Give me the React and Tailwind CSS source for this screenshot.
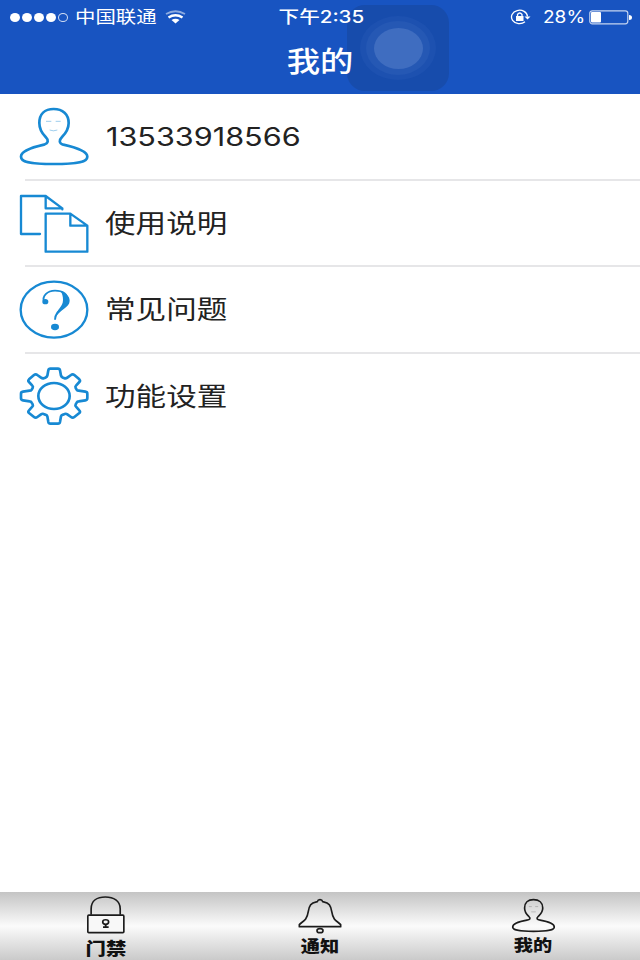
const BLUE = '#1789d3'

const SIGNAL = [true, true, true, true, false]

function PersonIcon() {
  return (
    <svg viewBox="57 35 210 180" className="h-[60px] w-[70px] shrink-0" fill="none" stroke={BLUE} strokeWidth="8" strokeLinejoin="round">
      <path d="M161 44C134 44 118 60 118 86C118 106 128 119 137 128C147 138 145 147 132 151C92 160 63 171 63 187C63 202 85 209 161 209C237 209 262 202 262 187C262 171 230 160 190 151C177 147 176 138 186 128C195 119 206 106 206 86C206 60 188 44 161 44Z" />
      <path d="M138 81H154M167 81H182M149 107Q160 112 172 107" strokeWidth="2.5" opacity="0.5" />
    </svg>
  )
}

function DocsIcon() {
  return (
    <svg viewBox="57 38 210 180" className="h-[60px] w-[70px] shrink-0" fill="none" stroke={BLUE} strokeWidth="7" strokeLinejoin="round" strokeLinecap="round">
      <path d="M120 161H63V47H137L187 84M137 47V84H187V87" />
      <path d="M137 100H211L262 136V214H137ZM211 100V136H262" />
    </svg>
  )
}

function QuestionIcon() {
  return (
    <svg viewBox="57 42 210 180" className="h-[60px] w-[70px] shrink-0" fill="none" stroke={BLUE}>
      <ellipse cx="162" cy="134" rx="100" ry="84" strokeWidth="7" />
      <path d="M132 110C126 94 141 77 165 77C190 77 203 89 203 105C203 130 166 130 165 164" strokeWidth="5.5" />
      <path d="M183 80C200 86 209 94 209 107C209 128 178 134 168 156C170 131 189 126 189 105C189 94 187 87 183 80Z" fill={BLUE} stroke="none" />
      <ellipse cx="136" cy="110" rx="9" ry="8" fill={BLUE} stroke="none" />
      <ellipse cx="165" cy="186" rx="12" ry="9.5" fill={BLUE} stroke="none" />
    </svg>
  )
}

function GearIcon() {
  return (
    <svg viewBox="57 48 210 180" className="h-[60px] w-[70px] shrink-0" fill="none" stroke={BLUE} strokeWidth="8" strokeLinejoin="round">
      <path d="M151 56H174Q179 56 180 61L183 77Q184 81 189 83L194 85Q198 86 202 83L213 75Q218 71 223 75L238 88Q242 92 238 96L228 107Q225 110 227 114L230 119Q232 122 236 122L256 125Q262 126 262 131V145Q262 150 256 151L236 154Q232 154 230 158L227 163Q225 167 228 170L238 181Q242 185 238 189L223 201Q218 205 213 201L202 193Q198 190 194 192L189 194Q184 195 183 199L180 216Q179 221 174 221H151Q146 221 145 216L142 199Q141 195 136 194L131 192Q127 190 123 193L112 201Q107 205 102 201L87 189Q83 185 87 181L97 170Q100 167 98 163L95 158Q93 154 89 154L69 151Q63 150 63 145V131Q63 126 69 125L89 122Q93 122 95 119L98 114Q100 110 97 107L87 96Q83 92 87 88L102 75Q107 71 112 75L123 83Q127 86 131 85L136 83Q141 81 142 77L145 61Q146 56 151 56Z" />
      <ellipse cx="162" cy="138" rx="47" ry="39" />
    </svg>
  )
}

const ROWS = [
  { label: '13533918566', Icon: PersonIcon, phone: true },
  { label: '使用说明', Icon: DocsIcon },
  { label: '常见问题', Icon: QuestionIcon },
  { label: '功能设置', Icon: GearIcon },
]

function LockTab() {
  return (
    <svg viewBox="80 44 118 118" className="h-[39px] w-[40px]" fill="none" stroke="#1c1c1c" strokeWidth="5">
      <path d="M94 104V86C94 62 112 50 137 50C162 50 182 62 182 86V104" />
      <rect x="84" y="105" width="109" height="53" rx="3" fill="#f8f8f8" />
      <ellipse cx="138" cy="126" rx="9" ry="7" strokeWidth="5" />
      <path d="M138 132V142M130 141H147" strokeWidth="5.5" />
    </svg>
  )
}

function BellTab() {
  return (
    <svg viewBox="84 54 132 108" className="h-[36px] w-[44px]" fill="none" stroke="#1c1c1c" strokeWidth="5" strokeLinejoin="round">
      <path d="M88 140V134C94 127 102 124 107 117C118 101 112 87 122 74C128 66 137 66 142 65C144 57 156 57 158 65C163 66 172 66 178 74C188 87 182 101 193 117C198 124 206 127 212 134V140Z" />
      <ellipse cx="150" cy="152" rx="9" ry="6" />
    </svg>
  )
}

function PersonTab() {
  return (
    <svg viewBox="94 54 134 106" className="h-[35px] w-[45px]" fill="none" stroke="#1c1c1c" strokeWidth="5">
      <path d="M161 59C144 59 134 69 134 84C134 98 141 104 147 110C153 116 151 120 141 121C117 125 98 133 98 142C98 151 114 155 161 155C208 155 224 151 224 142C224 133 205 125 181 121C171 120 169 116 175 110C181 104 189 98 189 84C189 69 178 59 161 59Z" />
      <path d="M147 80H156M166 80H175M154 96H168" strokeWidth="1.5" opacity="0.4" />
    </svg>
  )
}

function StatusBar() {
  return (
    <div className="grid h-[34px] grid-cols-3 items-center text-white">
      <div className="flex items-center pl-[10px]">
        <div className="flex gap-[2px]">
          {SIGNAL.map((on, i) => (
            <span key={i} className={on ? 'h-[9px] w-[10px] rounded-[50%] bg-white' : 'h-[9px] w-[10px] rounded-[50%] border border-white/80'} />
          ))}
        </div>
        <span className="ml-[7px] w-[82px] origin-left scale-x-[1.2] text-[17px] leading-none whitespace-nowrap">中国联通</span>
        <svg viewBox="0 0 21 14" className="ml-[8px] h-[14px] w-[21px]" fill="none" stroke="white">
          <path d="M1 4Q10.500 -1.500 20 4" strokeWidth="1.8" opacity="0.5" />
          <path d="M3.500 7.500Q10.500 3 17.500 7.500" strokeWidth="2.4" />
          <path d="M6.500 10Q10.500 7.500 14.500 10L10.500 13.500Z" fill="white" stroke="none" />
        </svg>
      </div>
      <div className="flex justify-center pl-[3px]">
        <span className="scale-x-[1.21] text-[17px] leading-none font-medium whitespace-nowrap">下午2:35</span>
      </div>
      <div className="flex items-center justify-end pr-[8px]">
        <svg viewBox="0 0 21 16" className="h-[16px] w-[21px]" fill="none" stroke="white" strokeWidth="1.3">
          <path d="M17.500 7.500A8 6.700 0 1 0 15 12.800" />
          <path d="M14.500 7.500H20.500L17.500 10.500Z" fill="white" stroke="none" />
          <rect x="6" y="7" width="7.500" height="5" fill="white" stroke="none" />
          <path d="M7.500 7V5.500Q9.700 2.500 12 5.500V7" />
        </svg>
        <span className="ml-[12px] w-[41px] origin-left scale-x-[1.12] text-[17px] leading-none">28%</span>
        <svg viewBox="0 0 43 15" className="ml-[5px] h-[15px] w-[43px]">
          <rect x="0.800" y="0.800" width="38" height="13" rx="2.500" fill="none" stroke="white" strokeOpacity="0.75" strokeWidth="1.200" />
          <rect x="2" y="2" width="10" height="10.600" rx="1" fill="white" />
          <path d="M40 5Q43 5 43 7.500Q43 10 40 10Z" fill="white" />
        </svg>
      </div>
    </div>
  )
}

export default function App() {
  return (
    <div className="flex h-[960px] w-[640px] flex-col overflow-hidden bg-white font-[Inter,'Noto_Sans_CJK_SC',sans-serif]">
      <header className="relative h-[94px] shrink-0 bg-[#1854c1]">
        <div className="absolute top-[5px] left-[347px] flex h-[86px] w-[102px] items-center justify-center rounded-[18px] bg-[#174cac]">
          <div className="flex h-[64px] w-[76px] items-center justify-center rounded-[50%] bg-[#1d51b0]">
            <div className="flex h-[54px] w-[64px] items-center justify-center rounded-[50%] bg-[#2558b4]">
              <div className="h-[41px] w-[49px] rounded-[50%] bg-[#3f6dc0]" />
            </div>
          </div>
        </div>
        <div className="relative">
          <StatusBar />
          <h1 className="mt-[12px] flex justify-center text-[28px] leading-[32px] font-medium text-white">
            <span className="scale-x-[1.19]">我的</span>
          </h1>
        </div>
      </header>

      <main className="flex-1">
        {ROWS.map(({ label, Icon, phone }, i) => (
          <div key={label}>
            <div className="flex h-[84.500px] items-center pl-[19px]">
              <Icon />
              <span className={phone
                ? 'ml-[17px] origin-left scale-x-[1.2] text-[25.500px] leading-none text-[#222]'
                : 'mt-[2px] ml-[16px] origin-left scale-x-[1.19] text-[25.700px] leading-none text-[#222]'}>
                {label}
              </span>
            </div>
            {i < ROWS.length - 1 && <div className="ml-[25px] h-[2px] bg-[#e6e6e8]" />}
          </div>
        ))}
      </main>

      <nav className="grid h-[68px] shrink-0 grid-cols-3 bg-linear-to-b from-[#c4c4c4] via-[#fbfbfb] to-[#cacaca] text-[#111]">
        <div className="flex flex-col items-center pt-[3px] pr-[2px]">
          <LockTab />
          <span className="mt-[5px] scale-x-[1.2] text-[17px] leading-[20px] font-black">门禁</span>
        </div>
        <div className="flex flex-col items-center pt-[6px]">
          <BellTab />
          <span className="mt-[2px] scale-x-[1.2] text-[16px] leading-[20px] font-black">通知</span>
        </div>
        <div className="flex flex-col items-center pt-[6px]">
          <PersonTab />
          <span className="mt-[2px] scale-x-[1.2] text-[16px] leading-[20px] font-black">我的</span>
        </div>
      </nav>
    </div>
  )
}
